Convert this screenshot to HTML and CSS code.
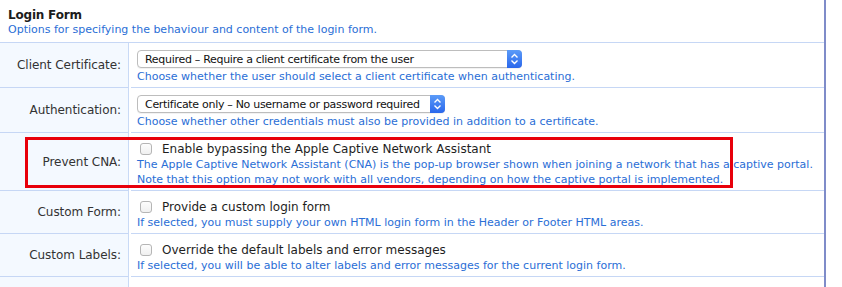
FILE: index.html
```html
<!DOCTYPE html>
<html>
<head>
<meta charset="utf-8">
<link rel="stylesheet" href="styles.css">
</head>
<body>
<div class="panel">
  <div class="head">
    <div class="title">Login Form</div>
    <div class="desc">Options for specifying the behaviour and content of the login form.</div>
  </div>
  <div class="rows">
    <div class="row">
      <div class="label">Client Certificate:</div>
      <div class="field">
        <div class="select sel1"><span class="sel-text">Required – Require a client certificate from the user</span><span class="sel-btn"><svg width="9" height="12" viewBox="0 0 9 12"><path d="M1.5 4.5 L4.5 1.5 L7.5 4.5 M1.5 7.5 L4.5 10.5 L7.5 7.5" fill="none" stroke="#fff" stroke-width="1.4"/></svg></span></div>
        <div class="help">Choose whether the user should select a client certificate when authenticating.</div>
      </div>
    </div>
    <div class="row">
      <div class="label">Authentication:</div>
      <div class="field">
        <div class="select sel2"><span class="sel-text">Certificate only – No username or password required</span><span class="sel-btn"><svg width="9" height="12" viewBox="0 0 9 12"><path d="M1.5 4.5 L4.5 1.5 L7.5 4.5 M1.5 7.5 L4.5 10.5 L7.5 7.5" fill="none" stroke="#fff" stroke-width="1.4"/></svg></span></div>
        <div class="help">Choose whether other credentials must also be provided in addition to a certificate.</div>
      </div>
    </div>
    <div class="row row-check">
      <div class="label">Prevent CNA:</div>
      <div class="field">
        <div class="check-line"><span class="box"></span><span>Enable bypassing the Apple Captive Network Assistant</span></div>
        <div class="help">The Apple Captive Network Assistant (CNA) is the pop-up browser shown when joining a network that has a captive portal.<br>Note that this option may not work with all vendors, depending on how the captive portal is implemented.</div>
      </div>
      <div class="highlight"></div>
    </div>
    <div class="row row-check">
      <div class="label">Custom Form:</div>
      <div class="field">
        <div class="check-line"><span class="box"></span><span>Provide a custom login form</span></div>
        <div class="help">If selected, you must supply your own HTML login form in the Header or Footer HTML areas.</div>
      </div>
    </div>
    <div class="row row-check">
      <div class="label">Custom Labels:</div>
      <div class="field">
        <div class="check-line"><span class="box"></span><span>Override the default labels and error messages</span></div>
        <div class="help">If selected, you will be able to alter labels and error messages for the current login form.</div>
      </div>
    </div>
    <div class="row row-check">
      <div class="label">&nbsp;</div>
      <div class="field">
        <div class="check-line"><span class="box"></span><span>&nbsp;</span></div>
        <div class="help">&nbsp;</div>
      </div>
    </div>
  </div>
</div>
</body>
</html>
```
FILE: styles.css
```css
html, body {
  margin: 0;
  padding: 0;
  background: #fff;
  overflow: hidden;
}
body {
  font-family: "DejaVu Sans", Verdana, sans-serif;
  color: #222;
}
.panel {
  width: 824px;
  border-right: 2px solid #7f8cc9;
  min-height: 287px;
}
.head {
  padding: 8px 8px 0 8px;
  height: 43px;
  box-sizing: border-box;
  border-bottom: 1px solid #c6d7f5;
}
.title {
  font-size: 12px;
  font-weight: bold;
  color: #1c1c1c;
  line-height: 15px;
  letter-spacing: -0.2px;
}
.desc {
  font-size: 11px;
  color: #2a6ed6;
  line-height: 14px;
}
.row {
  display: flex;
  position: relative;
  column-gap: 2px;
}
.label {
  flex: none;
  width: 129px;
  background: #f4f9ff;
  border-right: 1px solid #c9daf6;
  border-bottom: 1px solid #c6d7f5;
  box-sizing: border-box;
  display: flex;
  align-items: center;
  justify-content: flex-end;
  padding-right: 7px;
  font-size: 12px;
  color: #333;
  letter-spacing: -0.05px;
}
.field {
  flex: 1;
  border-bottom: 1px solid #c6d7f5;
  padding: 7px 0 3px 6px;
}
.select {
  display: flex;
  align-items: center;
  height: 18px;
  box-sizing: border-box;
  border: 1px solid #bdbdbd;
  border-radius: 4px;
  background: #fff;
  font-size: 11px;
  color: #111;
  letter-spacing: -0.3px;
  box-shadow: 0 1px 0 rgba(0,0,0,0.05);
}
.sel1 { width: 385px; }
.sel2 { width: 308px; }
.sel-text {
  flex: 1;
  padding-left: 7px;
  white-space: nowrap;
  overflow: hidden;
}
.sel-btn {
  width: 15px;
  height: 18px;
  margin: -1px -1px -1px 0;
  border-radius: 0 4px 4px 0;
  background: linear-gradient(#5b9bf8, #2a67ec);
  display: flex;
  align-items: center;
  justify-content: center;
}
.help {
  font-size: 11px;
  color: #2a6ed6;
  line-height: 15px;
  margin-top: 1px;
  white-space: nowrap;
}
.row-check .field { padding-top: 8px; }
.check-line {
  display: flex;
  align-items: center;
  gap: 10px;
  font-size: 12px;
  color: #1e1e1e;
  line-height: 16px;
  padding-left: 3px;
}
.check-line + .help { margin-top: 0; }
.box {
  width: 12px;
  height: 12px;
  box-sizing: border-box;
  border: 1px solid #b5b5b5;
  border-radius: 3px;
  background: linear-gradient(#fdfdfd, #f0f0f0);
}
.highlight {
  position: absolute;
  left: 25px;
  top: 4px;
  width: 708px;
  height: 51px;
  box-sizing: border-box;
  border: 3px solid #e8000b;
  pointer-events: none;
}
```
